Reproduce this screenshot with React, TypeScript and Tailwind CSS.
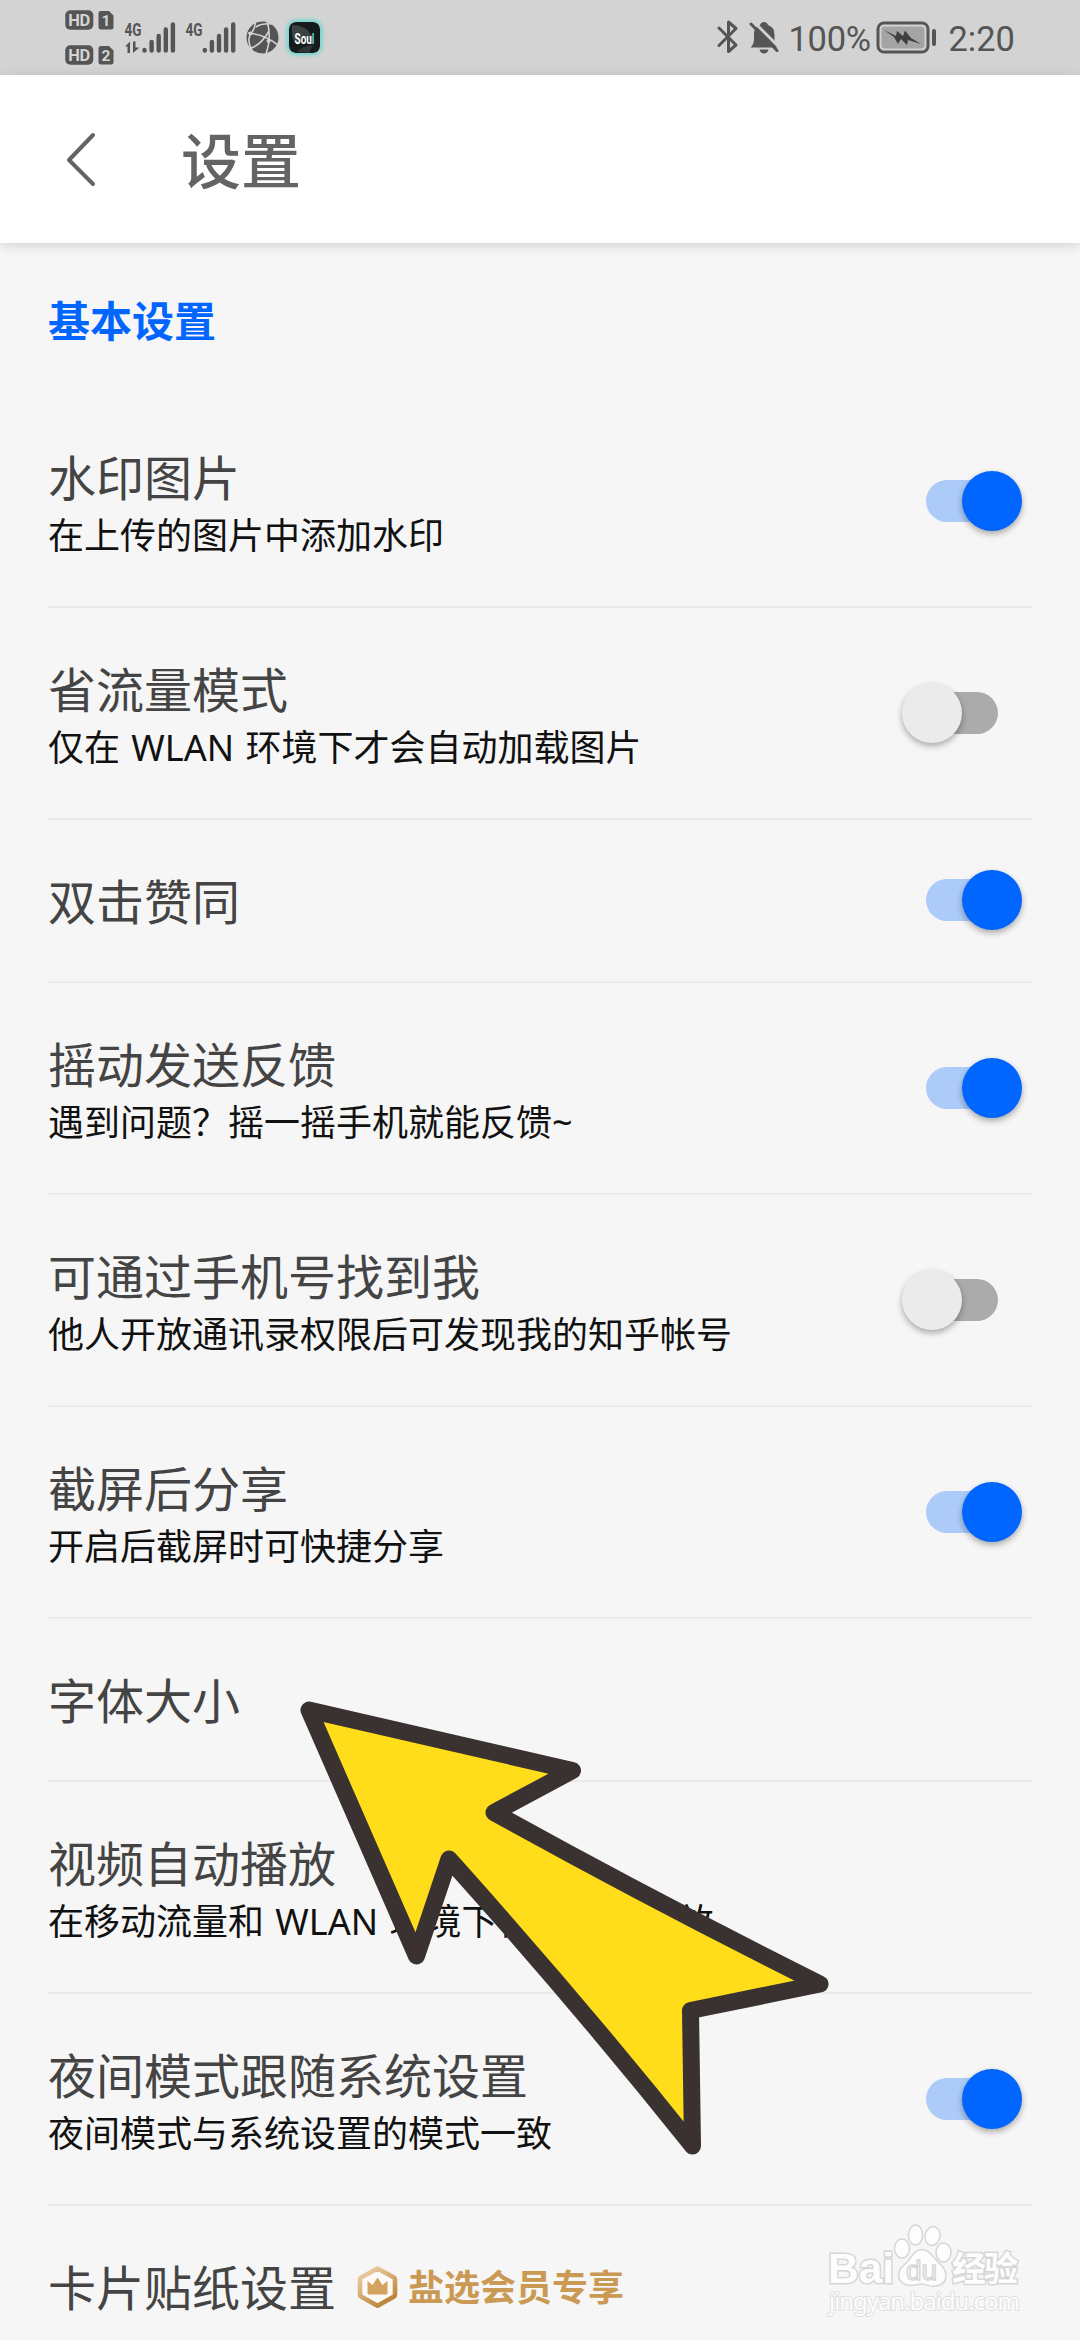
/**
 * Settings Page - basic settings list with toggle rows
 */

import { useState } from 'react';

type SettingItem = {
  id: string;
  title: string;
  description?: string;
  enabled?: boolean;
  vip?: boolean;
};

const SETTINGS: SettingItem[] = [
  { id: 'watermark', title: '水印图片', description: '在上传的图片中添加水印', enabled: true },
  { id: 'data-saver', title: '省流量模式', description: '仅在 WLAN 环境下才会自动加载图片', enabled: false },
  { id: 'double-tap', title: '双击赞同', enabled: true },
  { id: 'shake', title: '摇动发送反馈', description: '遇到问题？摇一摇手机就能反馈~', enabled: true },
  { id: 'phone', title: '可通过手机号找到我', description: '他人开放通讯录权限后可发现我的知乎帐号', enabled: false },
  { id: 'screenshot', title: '截屏后分享', description: '开启后截屏时可快捷分享', enabled: true },
  { id: 'font-size', title: '字体大小' },
  { id: 'autoplay', title: '视频自动播放', description: '在移动流量和 WLAN 环境下视频自动播放' },
  { id: 'night', title: '夜间模式跟随系统设置', description: '夜间模式与系统设置的模式一致', enabled: true },
  { id: 'sticker', title: '卡片贴纸设置', vip: true },
];

function HdBadge({ sim }: { sim: string }) {
  return (
    <svg className="overflow-visible" width="49" height="20" viewBox="0 0 49 20" fontFamily="Roboto, sans-serif" fontWeight="700">
      <rect x="0.3" y="0.3" width="28" height="19.4" rx="5" fill="#555" />
      <text x="14.3" y="15.8" fontSize="16.5" textAnchor="middle" textLength="22" fill="#d3d3d3">HD</text>
      <path d="M36 1h8l4.500 4.500V17a2.500 2.500 0 0 1-2.500 2.500H36A2.500 2.500 0 0 1 33.500 17V3.500A2.500 2.500 0 0 1 36 1z" fill="#555" />
      <text x="41" y="16.2" fontSize="15.5" textAnchor="middle" fill="#d3d3d3">{sim}</text>
    </svg>
  );
}

function Signal({ first = false }: { first?: boolean }) {
  const start = first ? 19.5 : 18.8;
  const tops = [29, 21, 15, 8.5, 3.5];
  return (
    <svg className="overflow-visible" width="50" height="34" viewBox="0 0 50 34" fill="none">
      <text x="-0.5" y="14.8" fontSize="19" fontWeight="700" fontFamily="Roboto, sans-serif" textLength="17" lengthAdjust="spacingAndGlyphs" fill="#555">4G</text>
      {first && <path d="M0 25.500l5-5v11.500H2.500v-6.500zM8 20.500h2.500v6h4l-6.500 5.500z" fill="#555" />}
      {tops.map((top, i) => (
        <path key={top} d={`M${start + i * 7.1} ${top}V29.6`} stroke="#555" strokeWidth="4.4" strokeLinecap="round" />
      ))}
    </svg>
  );
}

function StatusBar() {
  return (
    <div className="flex h-[75px] items-start justify-between bg-[#d3d3d3] pr-[65px] pl-[65px]">
      <div className="flex items-start">
        <div className="flex flex-col gap-[15px] pt-[10px]">
          <HdBadge sim="1" />
          <HdBadge sim="2" />
        </div>
        <div className="flex pt-[21px] pl-[11px]">
          <Signal first />
          <div className="pl-[11px]">
            <Signal />
          </div>
        </div>
        <svg className="mt-[21px] ml-[10px]" width="33" height="33" viewBox="0 0 33 33" fill="none">
          <circle cx="16.500" cy="16.500" r="16" fill="#555" />
          <path d="M9 0Q10 7 4 14Q1 21 6 29M2 12Q19 13 33 25M21 0Q26 16 20 33M5 27Q15 24 23 10" stroke="#d3d3d3" strokeWidth="1.6" />
          <path d="M10 6Q16 2 26 3" stroke="#d3d3d3" strokeWidth="1.6" />
          <circle cx="4.500" cy="12.500" r="2" fill="#d3d3d3" />
          <circle cx="22.500" cy="20" r="2" fill="#d3d3d3" />
        </svg>
        <svg className="mt-[22px] ml-[10px] rounded-[7px] shadow-[0_0_4px_2px_#64d6cf]" width="31" height="31" viewBox="0 0 31 31">
          <rect width="31" height="31" rx="6" fill="#151b1c" />
          <path d="M3 3Q17 3 23 14L24 20Q14 14 9 23Q2 20 3 3z" fill="#3c4142" />
          <path d="M8 30Q14 23 24 23L20 31z" fill="#303637" />
          <text x="5.500" y="21.5" fontSize="15" fontWeight="700" fontFamily="Roboto, sans-serif" textLength="20" lengthAdjust="spacingAndGlyphs" fill="#fff">
            Sou<tspan fill="#54d4cc">l</tspan>
          </text>
        </svg>
      </div>

      <div className="flex items-start text-[#555]">
        <svg className="mt-[20px]" width="22" height="34" viewBox="0 0 22 34" fill="none" stroke="currentColor" strokeWidth="3" strokeLinejoin="round" strokeLinecap="round">
          <path d="M2 8L19 25L11.500 31.500V2L19 8.500L2 25.500" />
        </svg>
        <svg className="mt-[21px] ml-[10px]" width="30" height="33" viewBox="0 0 30 33">
          <path d="M1.500 26.500Q5 23 5 18V13Q5 6 11 4Q12 1 15 1Q18 1 19 4Q25.500 6 25.500 14V19Q26 23 28.500 26.500z" fill="currentColor" />
          <path d="M10.500 28.500h9q-1 4-4.500 4t-4.500-4z" fill="currentColor" />
          <path d="M4 0L31 27" stroke="#d3d3d3" strokeWidth="3" />
          <path d="M2 3L28 29.500" stroke="currentColor" strokeWidth="3" strokeLinecap="round" />
        </svg>
        <span className="mt-[17px] ml-[9px] w-[86px] font-['Roboto',sans-serif] text-[34.500px] leading-[45px] tracking-[-0.3px]">100%</span>
        <svg className="mt-[21px] ml-[2px]" width="61" height="33" viewBox="0 0 61 33">
          <rect x="2" y="2" width="50" height="29" rx="6" fill="none" stroke="currentColor" strokeWidth="3" />
          <rect x="5.500" y="5.500" width="43" height="22" rx="3" fill="#a4a4a4" />
          <path d="M8 9L20 15L21 10L27 15L29 9.500L35 17L45 23L32 19L31 24L25 18L22 23L18 16z" fill="#3f3f3f" />
          <rect x="56" y="8" width="4" height="17" rx="2" fill="currentColor" />
        </svg>
        <span className="mt-[17px] ml-[11px] font-['Roboto',sans-serif] text-[34.500px] leading-[45px]">2:20</span>
      </div>
    </div>
  );
}

function Toggle({ checked, onChange }: { checked: boolean; onChange: () => void }) {
  return (
    <button
      role="switch"
      aria-checked={checked}
      onClick={onChange}
      className="relative mr-[10px] mb-px flex h-[60px] w-[120px] shrink-0 items-center justify-center"
    >
      <span className={`h-[42px] w-[72px] rounded-full ${checked ? 'bg-[#accbf9]' : 'bg-[#ababab]'}`} />
      <span
        className={`absolute top-0 size-[60px] rounded-full shadow-[0_3px_6px_rgba(0,0,0,0.32)] ${
          checked ? 'right-0 bg-[#0066ff]' : 'left-0 bg-[#ebebeb]'
        }`}
      />
    </button>
  );
}

function VipBadge() {
  return (
    <span className="flex items-center pl-[21px]">
      <svg width="41" height="43" viewBox="0 0 41 43">
        <defs>
          <linearGradient id="gold" x1="0" y1="0" x2="0.6" y2="1">
            <stop offset="0" stopColor="#f0d7b4" />
            <stop offset="1" stopColor="#bd8539" />
          </linearGradient>
        </defs>
        <path d="M20.500 2.500L37 11.500Q38 12 38 13.500V28.500Q38 30 37 30.500L20.500 39.800L4 30.500Q3 30 3 28.500V13.500Q3 12 4 11.500z" fill="#fcfaf7" stroke="url(#gold)" strokeWidth="4.6" strokeLinejoin="round" />
        <path d="M10.500 15L15.500 19L20.500 11.500L25.500 19L30.500 15V27Q30.500 28.500 29 28.500H12Q10.500 28.500 10.500 27z" fill="#d3a35f" />
      </svg>
      <span className="pl-[10px] text-[36px] leading-[50px] font-bold text-[#ca9953]">盐选会员专享</span>
    </span>
  );
}

function SettingRow({ item }: { item: SettingItem }) {
  const [checked, setChecked] = useState(!!item.enabled);

  return (
    <li
      className={`flex items-center justify-between border-b-2 border-[#ebebeb] ${item.description ? 'h-[212px]' : 'h-[163px]'}`}
    >
      <div className={item.description ? 'pt-[4px]' : 'pt-[2px]'}>
        <div className="flex items-center text-[48px] leading-[65px] text-[#444]">
          {item.title}
          {item.vip && <VipBadge />}
        </div>
        {item.description && (
          <p className="text-[36px] leading-[51px] whitespace-nowrap text-[#111] [word-spacing:2px]">{item.description}</p>
        )}
      </div>
      {item.enabled !== undefined && <Toggle checked={checked} onChange={() => setChecked(!checked)} />}
    </li>
  );
}

function Pointer() {
  return (
    <svg className="pointer-events-none absolute top-[1690px] left-[290px]" width="550" height="480" viewBox="290 1690 550 480">
      <path
        d="M309 1710L572.500 1770.500L494 1812.500Q650 1899 820 1984L690.500 2010.500L692.500 2146Q580 2005 449 1859L416.500 1956z"
        fill="#ffdd1a"
        stroke="#3a3131"
        strokeWidth="17"
        strokeLinejoin="round"
      />
    </svg>
  );
}

function Watermark() {
  return (
    <svg className="pointer-events-none absolute top-[2220px] left-[820px]" width="210" height="105" viewBox="820 2220 210 105" fill="#fdfdfd" stroke="#d6d6d6" strokeWidth="1.5">
      <g paintOrder="stroke" strokeWidth="3" fontWeight="700">
        <text x="828" y="2283" fontSize="42" fontFamily="'Liberation Sans', sans-serif" textLength="66" lengthAdjust="spacingAndGlyphs">Bai</text>
        <text x="952" y="2281" fontSize="34" fontFamily="'Noto Sans CJK SC', sans-serif" textLength="66">经验</text>
      </g>
      <ellipse cx="902" cy="2248.500" rx="7.500" ry="9.500" />
      <ellipse cx="915.500" cy="2235" rx="7" ry="10" />
      <ellipse cx="932.500" cy="2236" rx="7.500" ry="9.500" transform="rotate(12 932.500 2236)" />
      <ellipse cx="943.500" cy="2252.500" rx="7.500" ry="9.500" />
      <path d="M922 2249.500C930 2249.500 933 2258 940 2264C948 2271 949 2284 936 2286C928 2287 926 2284 922 2284C917 2284 914 2287 907 2285C896 2282 897 2271 904 2265C911 2259 914 2249.500 922 2249.500z" />
      <text x="921.500" y="2280" fontSize="28" fontWeight="400" fontFamily="'Liberation Sans', sans-serif" textAnchor="middle">du</text>
      <text x="829" y="2310" fontSize="24" strokeWidth="2" paintOrder="stroke" stroke="#dfdfdf" fontFamily="'Noto Sans', sans-serif" textLength="191">jingyan.baidu.com</text>
    </svg>
  );
}

export default function App() {
  return (
    <div className="relative h-[2340px] w-[1080px] overflow-hidden bg-[#f6f6f6] font-['Noto_Sans','Noto_Sans_CJK_SC',sans-serif]">
      <StatusBar />

      {/* Header */}
      <header className="flex h-[168px] items-center bg-white shadow-[0_3px_12px_rgba(0,0,0,0.14)]">
        <svg className="ml-[66px]" width="32" height="56" viewBox="0 0 32 56" fill="none" stroke="#646464" strokeWidth="4" strokeLinecap="round" strokeLinejoin="round">
          <path d="M27 4L3 29L27 53" />
        </svg>
        <h1 className="pt-[4px] pl-[83px] text-[60px] leading-[84px] font-medium text-[#646464]">设置</h1>
      </header>

      {/* Settings list */}
      <main className="px-[48px]">
        <h2 className="flex h-[153px] items-center pt-[3px] text-[42px] leading-[60px] font-bold text-[#0066ff]">基本设置</h2>
        <ul>
          {SETTINGS.map((item) => (
            <SettingRow key={item.id} item={item} />
          ))}
        </ul>
      </main>

      <Pointer />
      <Watermark />
    </div>
  );
}
